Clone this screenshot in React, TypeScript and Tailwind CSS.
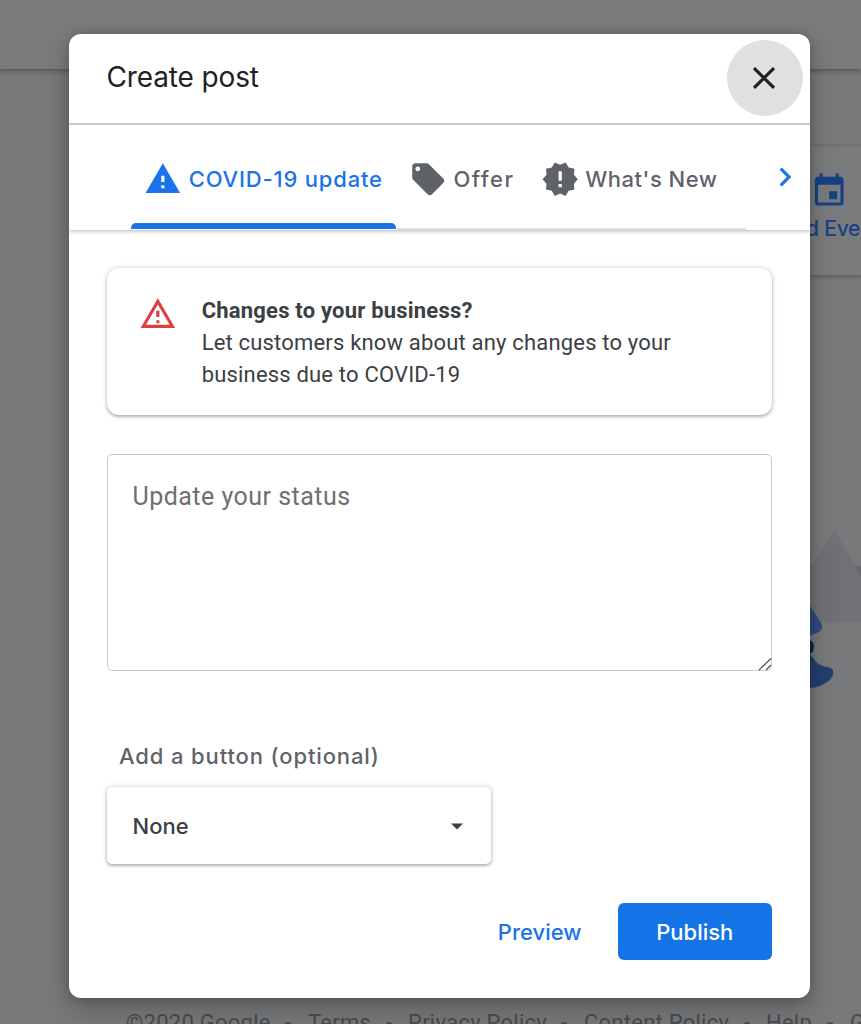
import React from "react";

type IconProps = { path: string; className?: string };

const Icon = ({ path, className = "" }: IconProps) => (
  <svg viewBox="0 0 24 24" fill="currentColor" className={"shrink-0 " + className} aria-hidden="true">
    <path d={path} />
  </svg>
);

const WARNING = "M1 21h22L12 2 1 21zm12-3h-2v-2h2v2zm0-4h-2v-4h2v4z";
const WARNING_OUTLINE =
  "M12 5.99L19.53 19H4.47L12 5.99M12 2L1 21h22L12 2zm1 14h-2v2h2v-2zm0-6h-2v4h2v-4z";
const OFFER =
  "M21.41 11.58l-9-9C12.05 2.22 11.55 2 11 2H4c-1.1 0-2 .9-2 2v7c0 .55.22 1.05.59 1.42l9 9c.36.36.86.58 1.41.58s1.05-.22 1.41-.59l7-7c.37-.36.59-.86.59-1.41s-.23-1.06-.59-1.42zM5.5 7C4.67 7 4 6.33 4 5.5S4.67 4 5.5 4 7 4.67 7 5.5 6.33 7 5.5 7z";
const NEW_RELEASES =
  "M23 12l-2.44-2.78.34-3.68-3.61-.82-1.89-3.18L12 3 8.6 1.54 6.71 4.72l-3.61.81.34 3.68L1 12l2.44 2.78-.34 3.69 3.61.82 1.89 3.18L12 21l3.4 1.46 1.89-3.18 3.61-.82-.34-3.68L23 12zm-10 5h-2v-2h2v2zm0-4h-2V7h2v6z";
const EVENT =
  "M17 12h-5v5h5v-5zM16 1v2H8V1H6v2H5c-1.11 0-1.99.9-1.99 2L3 19c0 1.1.89 2 2 2h14c1.1 0 2-.9 2-2V5c0-1.1-.9-2-2-2h-1V1h-2zm3 18H5V8h14v11z";
const CLOSE =
  "M19 6.41L17.59 5 12 10.59 6.41 5 5 6.41 10.59 12 5 17.59 6.41 19 12 13.41 17.59 19 19 17.59 13.41 12z";
const CHEVRON = "M10 6L8.59 7.41 13.17 12l-4.58 4.59L10 18l6-6z";

const Backdrop = () => (
  <div className="flex h-full flex-col bg-[#77797a]" aria-hidden="true">
    <div className="h-[69px] shrink-0 bg-[#7a7b7d] shadow-[0_1px_5px_1px_rgba(0,0,0,0.3)]" />
    <div className="mt-[77px] flex h-[129px] shrink-0 justify-end">
      <div className="flex w-[111px] flex-col bg-[#7a7b7d] pt-[26px] pl-[56px] text-[#174282] shadow-[0_1px_4px_1px_rgba(0,0,0,0.22)]">
        <Icon path={EVENT} className="ml-[4px] size-[38.4px]" />
        <span className="mt-[5px] font-['Inter',sans-serif] text-[21px] leading-7 font-medium tracking-[-0.2px] whitespace-nowrap">d Eve</span>
      </div>
    </div>
    <div className="flex flex-1 justify-end pt-[225px]">
      <svg className="h-[220px] w-[61px]" viewBox="800 500 61 220">
        <path d="M861 566h-8l-4 4 12 22z" fill="#68696b" />
        <path d="M800 580l33-46q2-3 4 0l24 43v45h-61z" fill="#707174" />
        <path d="M800 590l21 33q3 6-2 9l-19 8z" fill="#304a80" />
        <path d="M800 638l12 3q4 6 0 12l-12 4z" fill="#182746" />
        <path d="M800 646q9 5 16 16 6 5 12 5 7 2 5 8l-3 5q-12 9-22 8l-8-3z" fill="#253e6f" />
      </svg>
    </div>
    <div className="h-[15px] shrink-0">
      <div className="flex pl-[126px] text-[22px] leading-[28px] tracking-[0.25px] whitespace-nowrap text-[#4a4b4e]">
        <span className="w-[159px] shrink-0">©2020 Google</span>
        <span className="w-[23px] shrink-0">-</span>
        <span className="w-[78px] shrink-0">Terms</span>
        <span className="w-[22px] shrink-0">-</span>
        <span className="w-[153px] shrink-0">Privacy Policy</span>
        <span className="w-[23px] shrink-0">-</span>
        <span className="w-[160px] shrink-0">Content Policy</span>
        <span className="w-[22px] shrink-0">-</span>
        <span className="w-[61px] shrink-0">Help</span>
        <span className="w-[23px] shrink-0">-</span>
        <span>G</span>
      </div>
    </div>
  </div>
);

const Tabs = () => (
  <nav className="flex h-[105px] shrink-0 bg-white pl-[62.5px] shadow-[0_1px_4px_rgba(0,0,0,0.3)]">
    <div className="flex w-[615px] font-['Inter',sans-serif] text-[22px] leading-[30px] font-medium text-[#5f6368]">
      <div className="flex w-[265px] flex-col justify-between text-[#1a73e8]">
        <div className="flex items-start pt-[35px] pl-[13px]">
          <Icon path={WARNING} className="size-[37.7px]" />
          <span className="mt-[4px] ml-[7px] tracking-[0.82px] whitespace-nowrap">COVID-19 update</span>
        </div>
        <div className="mb-[1.5px] h-[5.5px] rounded-t-[5px] bg-[#1a73e8]" />
      </div>
      <div className="flex flex-1 border-b-2 border-[#e0e0e0] pt-[34.5px] pl-[13px]">
        <Icon path={OFFER} className="size-[38.4px]" />
        <span className="mt-[4.5px] ml-[6px] w-[72px] tracking-[1.5px] whitespace-nowrap">Offer</span>
        <Icon path={NEW_RELEASES} className="ml-[15.5px] size-[38.4px]" />
        <span className="mt-[4.5px] ml-[6px] tracking-[0.5px] whitespace-nowrap">What's New</span>
      </div>
    </div>
    <button className="mt-[33px] ml-[19.5px] h-[38px] text-[#1a73e8]" aria-label="Next">
      <Icon path={CHEVRON} className="size-[38px]" />
    </button>
  </nav>
);

export default function App() {
  return (
    <div className="relative h-[1024px] w-[861px] overflow-hidden font-['Roboto',sans-serif]">
      <Backdrop />
      <div className="absolute inset-0 pt-[33.5px] pl-[68.5px]">
        <main className="flex h-[964.5px] w-[741.5px] flex-col overflow-hidden rounded-[12px] bg-white shadow-[0_12px_28px_0_rgba(0,0,0,0.22),0_1px_12px_rgba(0,0,0,0.2)]">
          <header className="flex h-[91.5px] shrink-0 items-start justify-between border-b-2 border-[#d3d3da] pt-[6px] pr-[7px] pl-[38px]">
            <h1 className="mt-[17px] font-['Inter',sans-serif] text-[28px] leading-[40px] tracking-[-0.13px] text-[#202124]">
              Create post
            </h1>
            <button className="flex size-[76.5px] items-center justify-center rounded-full bg-[#e0e0e0] pr-px text-[#202124]" aria-label="Close">
              <Icon path={CLOSE} className="size-[38px]" />
            </button>
          </header>
          <Tabs />
          <section className="mt-[38px] ml-[38.5px] flex h-[147px] w-[665px] shrink-0 rounded-[12px] bg-white pt-[26.5px] pl-[32px] text-[22px] leading-8 text-[#3c4043] shadow-[0_2px_3px_rgba(60,64,67,0.3),0_0_4px_1px_rgba(60,64,67,0.16)]">
            <Icon path={WARNING_OUTLINE} className="size-[37.7px] text-[#db4141]" />
            <div className="mt-[0.5px] ml-[25px]">
              <h2 className="font-bold tracking-[0.2px] whitespace-nowrap">Changes to your business?</h2>
              <p className="tracking-[0.18px] whitespace-nowrap">
                Let customers know about any changes to your
                <br />
                business due to COVID-19
              </p>
            </div>
          </section>
          <div className="relative mt-[39px] ml-[38.5px] h-[217px] w-[664.5px] shrink-0">
            <textarea
              placeholder="Update your status"
              className="block h-full w-full resize-none rounded-[5px] border-[1.5px] border-[#c8c8cf] px-[24.5px] pt-[23px] text-[25px] leading-[38px] tracking-[0.48px] placeholder:text-[#6f6f6f]"
            />
            <svg className="absolute right-0 bottom-0 size-[14px]" viewBox="0 0 14 14" stroke="#555" strokeWidth="1.3">
              <path d="M1 13L13 1.5M8 13l5-5" />
            </svg>
          </div>
          <div className="mt-[70px] ml-[50.5px] h-[30px] shrink-0 font-['Inter',sans-serif] text-[22px] leading-[30px] font-medium tracking-[0.87px] text-[#5f6368]">
            Add a button (optional)
          </div>
          <button className="mt-[16px] ml-[38.5px] flex h-[77px] w-[384px] shrink-0 items-center justify-between rounded-[5px] bg-white pt-[2px] pr-[28px] pl-[25.5px] font-['Inter',sans-serif] text-[22px] font-medium text-[#3c4043] shadow-[0_2px_3px_rgba(60,64,67,0.3),0_0_4px_1px_rgba(60,64,67,0.18)]">
            <span>None</span>
            <svg className="h-[7px] w-[12px]" viewBox="0 0 12 7" fill="currentColor">
              <path d="M0 .5h12l-6 6z" />
            </svg>
          </button>
          <footer className="mt-[38.5px] mr-[38.5px] flex h-[57.5px] shrink-0 items-center justify-end font-['Inter',sans-serif] text-[22px] font-medium">
            <button className="mr-[36.5px] pt-[2px] text-[#1a73e8]">Preview</button>
            <button className="h-full w-[153.5px] rounded-[6px] bg-[#1473e6] pt-[2px] text-white">Publish</button>
          </footer>
        </main>
      </div>
    </div>
  );
}
